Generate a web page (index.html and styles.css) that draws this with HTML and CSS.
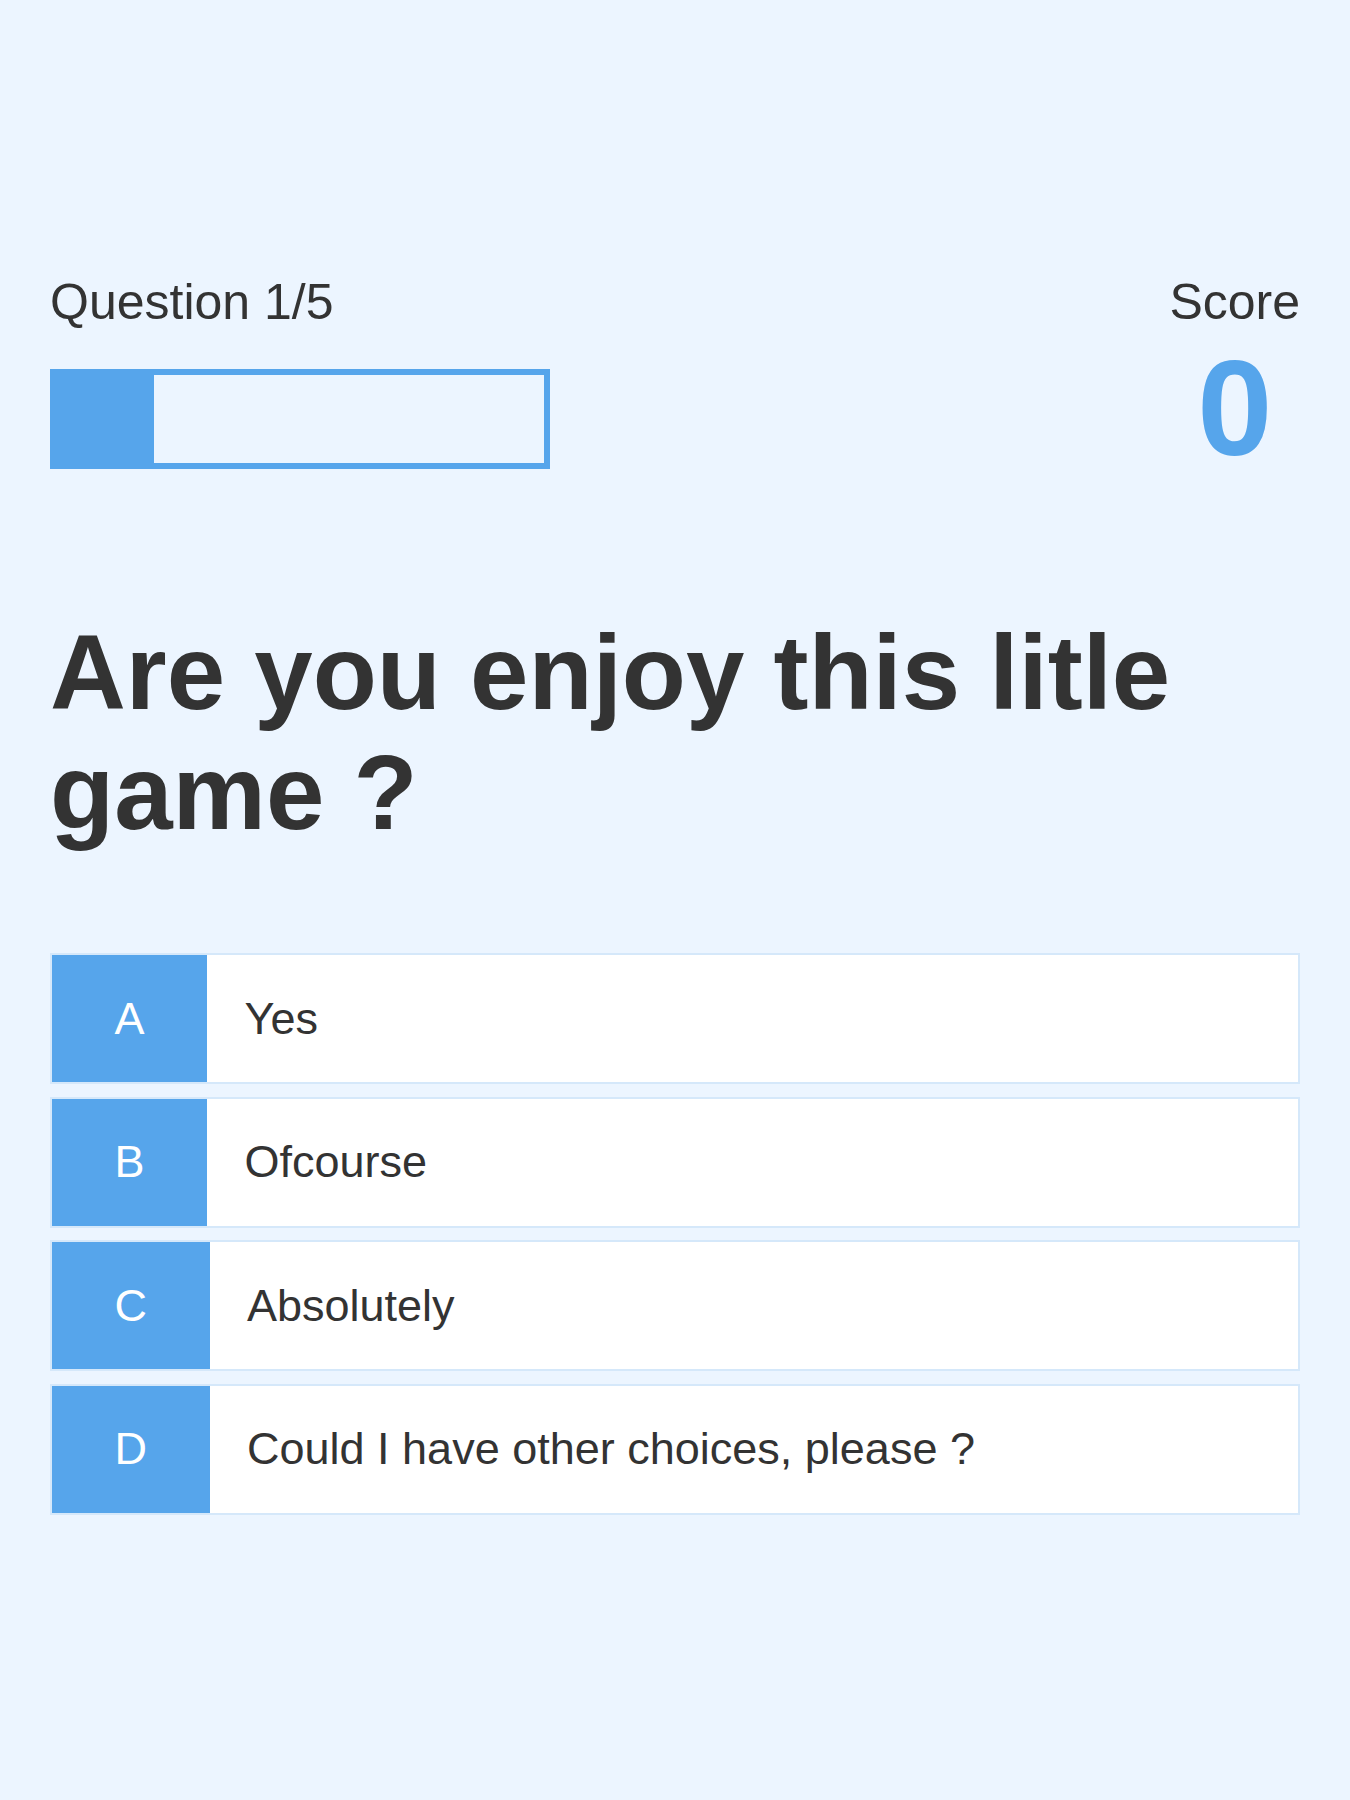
FILE: index.html
```html
<!DOCTYPE html>
<html lang="en">
<head>
<meta charset="utf-8">
<title>Quiz</title>
<link rel="stylesheet" href="styles.css">
</head>
<body>
<div class="container">
  <div class="game">
    <div class="hud">
      <div class="hud-item">
        <p class="hud-prefix">Question 1/5</p>
        <div class="progress-bar">
          <div class="progress-bar-full" style="width: 20%"></div>
        </div>
      </div>
      <div class="hud-item hud-score">
        <p class="hud-prefix">Score</p>
        <h1 class="hud-main-text">0</h1>
      </div>
    </div>
    <h2 class="question">Are you enjoy this litle game ?</h2>
    <div class="choice-container">
      <p class="choice-prefix">A</p>
      <p class="choice-text">Yes</p>
    </div>
    <div class="choice-container">
      <p class="choice-prefix">B</p>
      <p class="choice-text">Ofcourse</p>
    </div>
    <div class="choice-container">
      <p class="choice-prefix">C</p>
      <p class="choice-text">Absolutely</p>
    </div>
    <div class="choice-container">
      <p class="choice-prefix">D</p>
      <p class="choice-text">Could I have other choices, please ?</p>
    </div>
  </div>
</div>
</body>
</html>
```

FILE: styles.css
```css
html {
  background-color: #ecf5ff;
}
* {
  box-sizing: border-box;
  margin: 0;
  padding: 0;
  font-family: "Liberation Sans", Arial, Helvetica, sans-serif;
  color: #333;
}
body {
  margin: 0;
  background-color: #ecf5ff;
}
.container {
  width: 1350px;
  height: 1800px;
  padding: 50px;
  display: flex;
  flex-direction: column;
  justify-content: center;
}
.game {
  width: 100%;
}
.hud {
  display: flex;
  justify-content: space-between;
}
.hud-prefix {
  font-size: 50px;
  font-weight: 400;
}
.hud-score {
  text-align: center;
}
.hud-main-text {
  font-size: 135px;
  font-weight: 700;
  color: #56a5eb;
  margin-bottom: 127px;
}
.progress-bar {
  width: 500px;
  height: 100px;
  border: 6px solid #56a5eb;
  margin-top: 38px;
}
.progress-bar-full {
  height: 100%;
  background-color: #56a5eb;
}
.question {
  font-size: 105px;
  font-weight: 700;
  margin-bottom: 100px;
}
.choice-container {
  display: flex;
  width: 100%;
  margin-bottom: 12.5px;
  font-size: 45px;
  border: 2px solid rgba(86, 165, 235, 0.25);
  background-color: #fff;
}
.choice-prefix {
  padding: 37.5px 62.5px;
  background-color: #56a5eb;
  color: #fff;
}
.choice-text {
  padding: 37.5px;
  width: 100%;
}
```
